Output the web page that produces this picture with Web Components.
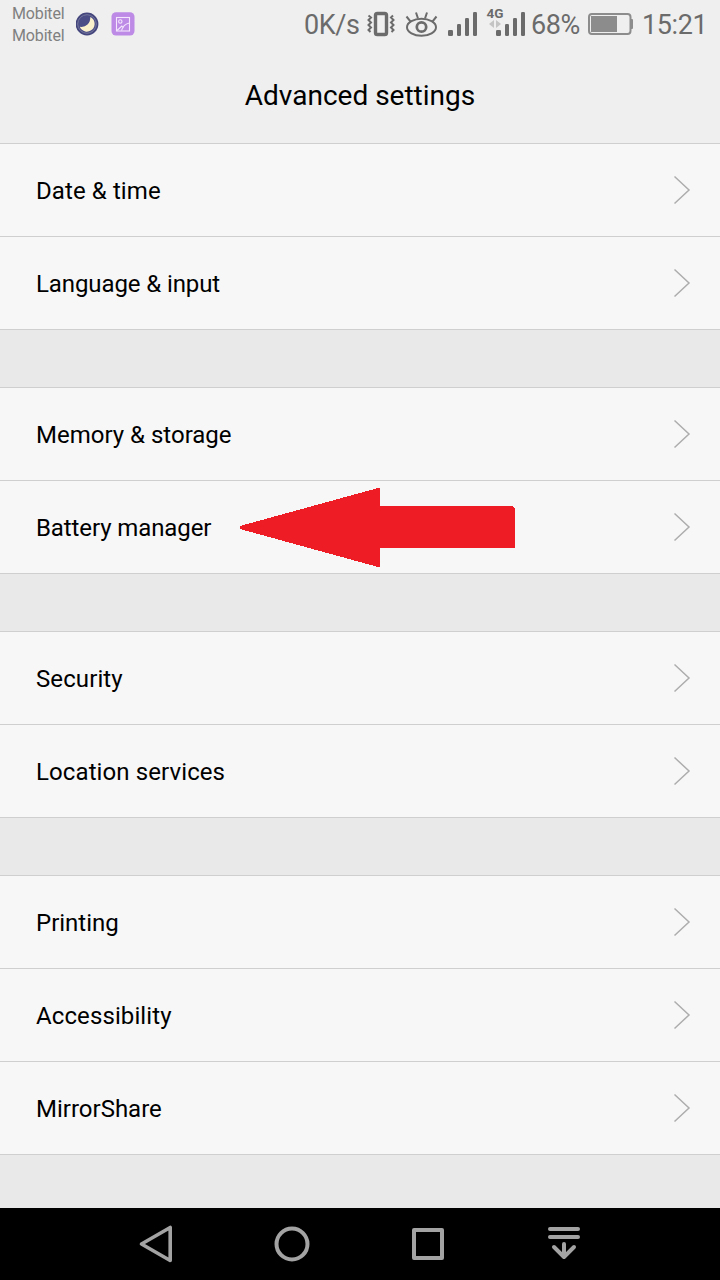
<!DOCTYPE html>
<html lang="en">
<head>
<meta charset="utf-8">
<title>Advanced settings</title>
<style>
html, body { margin: 0; padding: 0; }
body { width: 720px; height: 1280px; overflow: hidden; font-family: Roboto, "Liberation Sans", sans-serif; color: #000; background: #e9e9e9; }
</style>
</head>
<body>
<settings-screen></settings-screen>
<script>
const define = (name, html) => {
  const template = document.createElement('template');
  template.innerHTML = html;
  customElements.define(name, class extends HTMLElement {
    constructor() {
      super();
      this.attachShadow({ mode: 'open' }).append(template.content.cloneNode(true));
    }
  });
};

define('status-icon', `
<style>
:host { display: block; flex: none; height: 48px; }
::slotted(svg) { display: block; }
</style><slot></slot>`);

define('status-bar', `
<style>
:host { display: flex; height: 48px; padding-left: 12px; box-sizing: border-box; color: #6b6b6b; }
span { flex: none; white-space: nowrap; }
.carriers { display: flex; flex-direction: column; width: 64px; padding-top: 3px; font-size: 16px; line-height: 22px; letter-spacing: -0.15px; color: #808080; }
.speed, .percent, .clock { font-size: 27px; line-height: 50px; letter-spacing: -0.4px; }
.speed { width: 62px; margin-left: 168px; }
.percent { width: 57px; }
.clock { margin-left: 8px; }
</style>
<div class="carriers"><span>Mobitel</span><span>Mobitel</span></div>
<status-icon><svg width="60" height="48" viewBox="76 0 60 48">
  <circle cx="87" cy="24" r="11.4" fill="#43457c"/>
  <circle cx="87" cy="24" r="9.3" fill="#4b4d86" stroke="#777a9e" stroke-width="1"/>
  <path d="M90.300 17A7.700 7.700 0 1 1 79.800 26.800Q84.500 27.500 87.500 24.500Q90.500 21.500 90.300 17Z" fill="#fbf0cc"/>
  <rect x="111.500" y="12.300" width="23" height="23.200" rx="4.500" fill="#bd8ae6"/>
  <g fill="none" stroke="#f3e6fd" stroke-width="1.100"><rect x="116.500" y="17.500" width="13" height="13.500"/><circle cx="120.300" cy="21.500" r="1.700"/><path d="M117 30.500L121.800 26L123.500 28M121.500 30.500Q123.500 24 129.500 23"/></g>
</svg></status-icon>
<span class="speed">0K/s</span>
<status-icon><svg width="120" height="48" viewBox="366 0 120 48">
  <g fill="none" stroke="#6b6b6b">
    <rect x="375.500" y="13.500" width="11" height="21" rx="1.800" stroke-width="3.400"/>
    <path d="M368.500 15.500L371 17.500L368.500 20L371 22.500L368.500 25L371 27.500L368.500 30L370.500 32M393 15.500L391 17.500L393.500 20L391 22.500L393.500 25L391 27.500L393.500 30L391.500 32" stroke-width="2"/>
    <path d="M407 27.200C407 22.500 414 18.800 421.500 18.800S436 22.500 436 27.200S429 35.800 421.500 35.800S407 32 407 27.200Z" stroke-width="2"/>
    <circle cx="421.500" cy="27" r="4.700" stroke-width="2.700"/>
    <path d="M406.500 16.500L410.800 21.800M416 12.500L418 18.500M427 12.500L425 18.500M436.500 16.500L432.200 21.800" stroke-width="2"/>
  </g>
  <g fill="#6b6b6b"><rect x="448" y="30" width="5" height="6" rx="1.300"/><rect x="457" y="24" width="4" height="12" rx="1.200"/><rect x="465" y="18" width="4" height="18" rx="1.200"/><rect x="473" y="12" width="4" height="24" rx="1.200"/></g>
</svg></status-icon>
<status-icon><svg width="45" height="48" viewBox="486 0 45 48">
  <text x="486.500" y="17.900" font-family="Roboto" font-size="13.500" font-weight="700" fill="#6b6b6b">4G</text>
  <path d="M494 20V28L489 24ZM496 20V28L501 24Z" fill="#c4c4c4"/>
  <g fill="#6b6b6b"><rect x="496" y="30" width="5" height="6" rx="1.300"/><rect x="505" y="24" width="4" height="12" rx="1.200"/><rect x="513" y="18" width="4" height="18" rx="1.200"/><rect x="521" y="12" width="4" height="24" rx="1.200"/></g>
</svg></status-icon>
<span class="percent">68%</span>
<status-icon><svg width="46" height="48" viewBox="588 0 46 48">
  <rect x="589" y="14" width="41.500" height="20" rx="3" fill="none" stroke="#8c8c8c" stroke-width="2"/>
  <rect x="591" y="16" width="26" height="16" fill="#8c8c8c"/>
  <path d="M631 19h1q1 0 1 1v8q0 1-1 1h-1z" fill="#8c8c8c"/>
</svg></status-icon>
<span class="clock">15:21</span>`);

define('title-bar', `
<style>
:host { display: flex; justify-content: center; height: 96px; box-sizing: border-box; border-bottom: 1px solid #cfcfcf; font-size: 28px; line-height: 95px; }
</style><slot></slot>`);

define('settings-row', `
<style>
:host { display: flex; align-items: center; justify-content: space-between; height: 93px; box-sizing: border-box; padding: 0 28px 0 36px; border-bottom: 1px solid #cfcfcf; background: #f7f7f7; font-size: 24px; line-height: 30px; }
.label { display: flex; align-items: center; padding-top: 2px; letter-spacing: var(--tracking, 0); }
svg { display: block; }
</style>
<span class="label"><slot></slot></span>
<svg width="20" height="32" viewBox="0 0 20 32"><path d="M2.500 2.500L17 16L2.500 29.500" fill="none" stroke="#adadad" stroke-width="1.500"/></svg>`);

define('settings-group', `
<style>
:host { display: block; }
:host([spaced]) { margin-top: 57px; border-top: 1px solid #cfcfcf; }
</style><slot></slot>`);

define('pointer-arrow', `
<style>
:host { position: absolute; left: 240px; top: 7px; }
svg { display: block; }
</style>
<svg width="276" height="80" viewBox="0 0 276 80" shape-rendering="crispEdges"><path d="M0 38L138 0H140V18H272L275 20V60H140V79H138L0 41Z" fill="#ee1c25"/></svg>`);

define('nav-bar', `
<style>
:host { display: flex; justify-content: center; gap: 100px; height: 72px; background: #000; }
svg { display: block; flex: none; fill: none; stroke: #a3a3a3; stroke-width: 4; stroke-linejoin: round; stroke-linecap: round; }
</style>
<svg width="36" height="72" viewBox="138 1208 36 72"><path d="M170.200 1227.500V1260.500L141.500 1244Z" stroke-width="3.600"/></svg>
<svg width="36" height="72" viewBox="274 1208 36 72"><circle cx="292" cy="1244" r="15.500"/></svg>
<svg width="36" height="72" viewBox="410 1208 36 72"><rect x="414" y="1230" width="28" height="28"/></svg>
<svg width="36" height="72" viewBox="546 1208 36 72"><path d="M550 1229H578M550 1237H578M564 1244V1256M554 1247L564 1257L574 1247"/></svg>`);

define('settings-screen', `
<style>
:host { display: flex; flex-direction: column; width: 720px; height: 1280px; background: #e9e9e9; }
header { background: #efefef; }
main { flex: 1; min-height: 0; }
.pointed { position: relative; }
.tight { --tracking: -0.1px; }
.loose { --tracking: 0.1px; }
</style>
<header><status-bar></status-bar><title-bar>Advanced settings</title-bar></header>
<main>
  <settings-group><settings-row class="loose">Date &amp; time</settings-row><settings-row class="tight">Language &amp; input</settings-row></settings-group>
  <settings-group spaced><settings-row>Memory &amp; storage</settings-row><div class="pointed"><settings-row class="tight">Battery manager</settings-row><pointer-arrow></pointer-arrow></div></settings-group>
  <settings-group spaced><settings-row class="loose">Security</settings-row><settings-row class="loose">Location services</settings-row></settings-group>
  <settings-group spaced><settings-row>Printing</settings-row><settings-row class="loose">Accessibility</settings-row><settings-row>MirrorShare</settings-row></settings-group>
</main>
<nav-bar></nav-bar>`);
</script>
</body>
</html>
